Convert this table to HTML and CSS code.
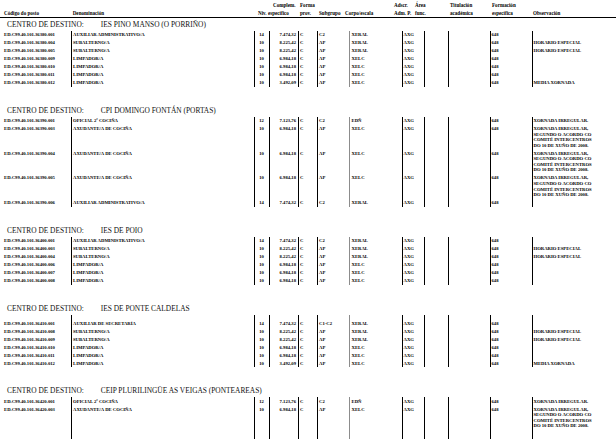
FILE: index.html
```html
<!DOCTYPE html>
<html lang="gl">
<head>
<meta charset="utf-8">
<title>Postos</title>
<link rel="stylesheet" href="styles.css">
</head>
<body>
<div class="page">
  <div class="head">
    <div class="hc h-code"><span></span><span>Código do posto</span></div>
    <div class="hc h-den"><span></span><span>Denominación</span></div>
    <div class="hc h-niv"><span></span><span>Niv.</span></div>
    <div class="hc h-comp"><span class="h-comp1">Complem.</span><span>específico</span></div>
    <div class="hc h-forma"><span>Forma</span><span>prov.</span></div>
    <div class="hc h-sub"><span></span><span>Subgrupo</span></div>
    <div class="hc h-corpo"><span></span><span>Corpo/escala</span></div>
    <div class="hc h-adsc"><span>Adscr.</span><span>Adm. P.</span></div>
    <div class="hc h-area"><span>Área</span><span>func.</span></div>
    <div class="hc h-tit"><span>Titulación</span><span>académica</span></div>
    <div class="hc h-form"><span>Formación</span><span>específica</span></div>
    <div class="hc h-obs"><span></span><span>Observación</span></div>
  </div>

  <section class="sec">
    <h2 class="title first"><span>CENTRO DE DESTINO:</span><span class="name">IES PINO MANSO (O PORRIÑO)</span></h2>
    <table class="grid">
      <colgroup><col class="w-code"><col class="w-den"><col class="w-niv"><col class="w-comp"><col class="w-forma"><col class="w-sub"><col class="w-corpo"><col class="w-adsc"><col class="w-area"><col class="w-tit"><col class="w-form"><col class="w-obs"></colgroup>
      <tr><td class="code">ED.C99.40.101.36380.001</td><td class="den">AUXILIAR ADMINISTRATIVO/A</td><td class="niv">14</td><td class="comp">7.474,32</td><td class="forma">C</td><td class="sub">C2</td><td class="corpo">XERAL</td><td class="adsc">AXG</td><td></td><td></td><td class="form">648</td><td class="obs"></td></tr>
      <tr><td class="code">ED.C99.40.101.36380.004</td><td class="den">SUBALTERNO/A</td><td class="niv">10</td><td class="comp">8.225,42</td><td class="forma">C</td><td class="sub">AP</td><td class="corpo">XERAL</td><td class="adsc">AXG</td><td></td><td></td><td class="form">648</td><td class="obs">HORARIO ESPECIAL</td></tr>
      <tr><td class="code">ED.C99.40.101.36380.005</td><td class="den">SUBALTERNO/A</td><td class="niv">10</td><td class="comp">8.225,42</td><td class="forma">C</td><td class="sub">AP</td><td class="corpo">XERAL</td><td class="adsc">AXG</td><td></td><td></td><td class="form">648</td><td class="obs">HORARIO ESPECIAL</td></tr>
      <tr><td class="code">ED.C99.40.101.36380.009</td><td class="den">LIMPADOR/A</td><td class="niv">10</td><td class="comp">6.984,18</td><td class="forma">C</td><td class="sub">AP</td><td class="corpo">XELC</td><td class="adsc">AXG</td><td></td><td></td><td class="form">648</td><td class="obs"></td></tr>
      <tr><td class="code">ED.C99.40.101.36380.010</td><td class="den">LIMPADOR/A</td><td class="niv">10</td><td class="comp">6.984,18</td><td class="forma">C</td><td class="sub">AP</td><td class="corpo">XELC</td><td class="adsc">AXG</td><td></td><td></td><td class="form">648</td><td class="obs"></td></tr>
      <tr><td class="code">ED.C99.40.101.36380.011</td><td class="den">LIMPADOR/A</td><td class="niv">10</td><td class="comp">6.984,18</td><td class="forma">C</td><td class="sub">AP</td><td class="corpo">XELC</td><td class="adsc">AXG</td><td></td><td></td><td class="form">648</td><td class="obs"></td></tr>
      <tr><td class="code">ED.C99.40.101.36380.012</td><td class="den">LIMPADOR/A</td><td class="niv">10</td><td class="comp">3.492,09</td><td class="forma">C</td><td class="sub">AP</td><td class="corpo">XELC</td><td class="adsc">AXG</td><td></td><td></td><td class="form">648</td><td class="obs">MEDIA XORNADA</td></tr>
    </table>
  </section>

  <section class="sec">
    <h2 class="title"><span>CENTRO DE DESTINO:</span><span class="name">CPI DOMINGO FONTÁN (PORTAS)</span></h2>
    <table class="grid">
      <colgroup><col class="w-code"><col class="w-den"><col class="w-niv"><col class="w-comp"><col class="w-forma"><col class="w-sub"><col class="w-corpo"><col class="w-adsc"><col class="w-area"><col class="w-tit"><col class="w-form"><col class="w-obs"></colgroup>
      <tr><td class="code">ED.C99.40.101.36390.001</td><td class="den">OFICIAL 2ª COCIÑA</td><td class="niv">12</td><td class="comp">7.123,76</td><td class="forma">C</td><td class="sub">C2</td><td class="corpo">EDÑ</td><td class="adsc">AXG</td><td></td><td></td><td class="form">648</td><td class="obs">XORNADA IRREGULAR.</td></tr>
      <tr><td class="code">ED.C99.40.101.36390.003</td><td class="den">AXUDANTE/A DE COCIÑA</td><td class="niv">10</td><td class="comp">6.984,18</td><td class="forma">C</td><td class="sub">AP</td><td class="corpo">XELC</td><td class="adsc">AXG</td><td></td><td></td><td class="form">648</td><td class="obs">XORNADA IRREGULAR,<br>SEGUNDO O ACORDO CO<br>COMITÉ INTERCENTROS<br>DO 10 DE XUÑO DE 2008.</td></tr>
      <tr><td class="code">ED.C99.40.101.36390.004</td><td class="den">AXUDANTE/A DE COCIÑA</td><td class="niv">10</td><td class="comp">6.984,18</td><td class="forma">C</td><td class="sub">AP</td><td class="corpo">XELC</td><td class="adsc">AXG</td><td></td><td></td><td class="form">648</td><td class="obs">XORNADA IRREGULAR,<br>SEGUNDO O ACORDO CO<br>COMITÉ INTERCENTROS<br>DO 10 DE XUÑO DE 2008.</td></tr>
      <tr><td class="code">ED.C99.40.101.36390.005</td><td class="den">AXUDANTE/A DE COCIÑA</td><td class="niv">10</td><td class="comp">6.984,18</td><td class="forma">C</td><td class="sub">AP</td><td class="corpo">XELC</td><td class="adsc">AXG</td><td></td><td></td><td class="form">648</td><td class="obs">XORNADA IRREGULAR,<br>SEGUNDO O ACORDO CO<br>COMITÉ INTERCENTROS<br>DO 10 DE XUÑO DE 2008.</td></tr>
      <tr><td class="code">ED.C99.40.101.36390.006</td><td class="den">AUXILIAR ADMINISTRATIVO/A</td><td class="niv">14</td><td class="comp">7.474,32</td><td class="forma">C</td><td class="sub">C2</td><td class="corpo">XERAL</td><td class="adsc">AXG</td><td></td><td></td><td class="form">648</td><td class="obs"></td></tr>
    </table>
  </section>

  <section class="sec">
    <h2 class="title"><span>CENTRO DE DESTINO:</span><span class="name">IES DE POIO</span></h2>
    <table class="grid">
      <colgroup><col class="w-code"><col class="w-den"><col class="w-niv"><col class="w-comp"><col class="w-forma"><col class="w-sub"><col class="w-corpo"><col class="w-adsc"><col class="w-area"><col class="w-tit"><col class="w-form"><col class="w-obs"></colgroup>
      <tr><td class="code">ED.C99.40.101.36400.001</td><td class="den">AUXILIAR ADMINISTRATIVO/A</td><td class="niv">14</td><td class="comp">7.474,32</td><td class="forma">C</td><td class="sub">C2</td><td class="corpo">XERAL</td><td class="adsc">AXG</td><td></td><td></td><td class="form">648</td><td class="obs"></td></tr>
      <tr><td class="code">ED.C99.40.101.36400.003</td><td class="den">SUBALTERNO/A</td><td class="niv">10</td><td class="comp">8.225,42</td><td class="forma">C</td><td class="sub">AP</td><td class="corpo">XERAL</td><td class="adsc">AXG</td><td></td><td></td><td class="form">648</td><td class="obs">HORARIO ESPECIAL</td></tr>
      <tr><td class="code">ED.C99.40.101.36400.004</td><td class="den">SUBALTERNO/A</td><td class="niv">10</td><td class="comp">8.225,42</td><td class="forma">C</td><td class="sub">AP</td><td class="corpo">XERAL</td><td class="adsc">AXG</td><td></td><td></td><td class="form">648</td><td class="obs">HORARIO ESPECIAL</td></tr>
      <tr><td class="code">ED.C99.40.101.36400.006</td><td class="den">LIMPADOR/A</td><td class="niv">10</td><td class="comp">6.984,18</td><td class="forma">C</td><td class="sub">AP</td><td class="corpo">XELC</td><td class="adsc">AXG</td><td></td><td></td><td class="form">648</td><td class="obs"></td></tr>
      <tr><td class="code">ED.C99.40.101.36400.007</td><td class="den">LIMPADOR/A</td><td class="niv">10</td><td class="comp">6.984,18</td><td class="forma">C</td><td class="sub">AP</td><td class="corpo">XELC</td><td class="adsc">AXG</td><td></td><td></td><td class="form">648</td><td class="obs"></td></tr>
      <tr><td class="code">ED.C99.40.101.36400.008</td><td class="den">LIMPADOR/A</td><td class="niv">10</td><td class="comp">6.984,18</td><td class="forma">C</td><td class="sub">AP</td><td class="corpo">XELC</td><td class="adsc">AXG</td><td></td><td></td><td class="form">648</td><td class="obs"></td></tr>
    </table>
  </section>

  <section class="sec">
    <h2 class="title"><span>CENTRO DE DESTINO:</span><span class="name">IES DE PONTE CALDELAS</span></h2>
    <table class="grid">
      <colgroup><col class="w-code"><col class="w-den"><col class="w-niv"><col class="w-comp"><col class="w-forma"><col class="w-sub"><col class="w-corpo"><col class="w-adsc"><col class="w-area"><col class="w-tit"><col class="w-form"><col class="w-obs"></colgroup>
      <tr class="lead"><td class="code">ED.C99.40.101.36410.001</td><td class="den">AUXILIAR DE SECRETARÍA</td><td class="niv">14</td><td class="comp">7.474,32</td><td class="forma">C</td><td class="sub">C1-C2</td><td class="corpo">XERAL</td><td class="adsc">AXG</td><td></td><td></td><td class="form">648</td><td class="obs"></td></tr>
      <tr><td class="code">ED.C99.40.101.36410.008</td><td class="den">SUBALTERNO/A</td><td class="niv">10</td><td class="comp">8.225,42</td><td class="forma">C</td><td class="sub">AP</td><td class="corpo">XERAL</td><td class="adsc">AXG</td><td></td><td></td><td class="form">648</td><td class="obs">HORARIO ESPECIAL</td></tr>
      <tr><td class="code">ED.C99.40.101.36410.009</td><td class="den">SUBALTERNO/A</td><td class="niv">10</td><td class="comp">8.225,42</td><td class="forma">C</td><td class="sub">AP</td><td class="corpo">XERAL</td><td class="adsc">AXG</td><td></td><td></td><td class="form">648</td><td class="obs">HORARIO ESPECIAL</td></tr>
      <tr><td class="code">ED.C99.40.101.36410.010</td><td class="den">LIMPADOR/A</td><td class="niv">10</td><td class="comp">6.984,18</td><td class="forma">C</td><td class="sub">AP</td><td class="corpo">XELC</td><td class="adsc">AXG</td><td></td><td></td><td class="form">648</td><td class="obs"></td></tr>
      <tr><td class="code">ED.C99.40.101.36410.011</td><td class="den">LIMPADOR/A</td><td class="niv">10</td><td class="comp">6.984,18</td><td class="forma">C</td><td class="sub">AP</td><td class="corpo">XELC</td><td class="adsc">AXG</td><td></td><td></td><td class="form">648</td><td class="obs"></td></tr>
      <tr><td class="code">ED.C99.40.101.36410.012</td><td class="den">LIMPADOR/A</td><td class="niv">10</td><td class="comp">3.492,09</td><td class="forma">C</td><td class="sub">AP</td><td class="corpo">XELC</td><td class="adsc">AXG</td><td></td><td></td><td class="form">648</td><td class="obs">MEDIA XORNADA</td></tr>
    </table>
  </section>

  <section class="sec">
    <h2 class="title"><span>CENTRO DE DESTINO:</span><span class="name">CEIP PLURILINGÜE AS VEIGAS (PONTEAREAS)</span></h2>
    <table class="grid">
      <colgroup><col class="w-code"><col class="w-den"><col class="w-niv"><col class="w-comp"><col class="w-forma"><col class="w-sub"><col class="w-corpo"><col class="w-adsc"><col class="w-area"><col class="w-tit"><col class="w-form"><col class="w-obs"></colgroup>
      <tr><td class="code">ED.C99.40.101.36420.001</td><td class="den">OFICIAL 2ª COCIÑA</td><td class="niv">12</td><td class="comp">7.123,76</td><td class="forma">C</td><td class="sub">C2</td><td class="corpo">EDÑ</td><td class="adsc">AXG</td><td></td><td></td><td class="form">648</td><td class="obs">XORNADA IRREGULAR.</td></tr>
      <tr class="tail"><td class="code">ED.C99.40.101.36420.003</td><td class="den">AXUDANTE/A DE COCIÑA</td><td class="niv">10</td><td class="comp">6.984,18</td><td class="forma">C</td><td class="sub">AP</td><td class="corpo">XELC</td><td class="adsc">AXG</td><td></td><td></td><td class="form">648</td><td class="obs">XORNADA IRREGULAR,<br>SEGUNDO O ACORDO CO<br>COMITÉ INTERCENTROS<br>DO 10 DE XUÑO DE 2008.</td></tr>
    </table>
  </section>
</div>
</body>
</html>
```

FILE: styles.css
```css
* { box-sizing: border-box; margin: 0; padding: 0; }

html, body {
  margin: 0;
  background: #ffffff;
}

body {
  width: 616px;
  height: 439px;
  overflow: hidden;
  font-family: "Liberation Serif", "Times New Roman", serif;
  color: #000000;
}

/* header */
.head {
  display: grid;
  grid-template-columns: 72.7px 185.3px 10px 32px 19px 26px 49px 21px 35px 42px 41px 1fr;
  padding-top: 2px;
  border-bottom: 1px solid #000000;
}

.hc {
  display: flex;
  flex-direction: column;
  font-size: 5.1px;
  font-weight: bold;
  line-height: 7.5px;
  white-space: nowrap;
}

.hc span { height: 7.5px; display: block; }

.h-code { padding-left: 4px; }
.h-comp1 { padding-left: 5px; }

/* section titles */
.title {
  font-size: 7.4px;
  font-weight: normal;
  line-height: 10px;
  height: 10px;
  margin-top: 19px;
  margin-bottom: 1px;
  padding-left: 7px;
  white-space: nowrap;
  color: #111111;
}

.title.first { margin-top: 2px; }

.title .name { margin-left: 17px; }

/* data grid */
table.grid {
  border-collapse: collapse;
  table-layout: fixed;
  width: 616px;
}

.w-code  { width: 71px; }
.w-den   { width: 183px; }
.w-niv   { width: 15px; }
.w-comp  { width: 29px; }
.w-forma { width: 19px; }
.w-sub   { width: 32px; }
.w-corpo { width: 53px; }
.w-adsc  { width: 22px; }
.w-area  { width: 24px; }
.w-tit   { width: 42px; }
.w-form  { width: 42px; }
.w-obs   { width: 84px; }

.grid td {
  font-size: 4.7px;
  font-weight: bold;
  line-height: 5.6px;
  padding: 1.2px 0 1.2px 1px;
  white-space: nowrap;
  overflow: hidden;
  vertical-align: top;
}

.grid td + td { border-left: 1px solid #000000; }

.grid .code  { padding-left: 4px; }
.grid .den   { padding-left: 1.5px; }
.grid .niv   { text-align: center; padding-left: 0; }
.grid .comp  { text-align: right; padding-right: 1.5px; padding-left: 0; }
.grid .forma { padding-left: 1.5px; }
.grid .sub   { padding-left: 1.5px; }
.grid td.corpo { padding-left: 2px; border-left: 1.5px solid #8c8c8c; }
.grid .adsc  { padding-left: 1px; }
.grid .form  { padding-left: 1px; }
.grid td.obs { padding-left: 1px; border-left: 1.4px solid #000000; }

.grid tr.lead td { padding-top: 6px; }
.grid tr.tail td { padding-bottom: 12px; }
```
